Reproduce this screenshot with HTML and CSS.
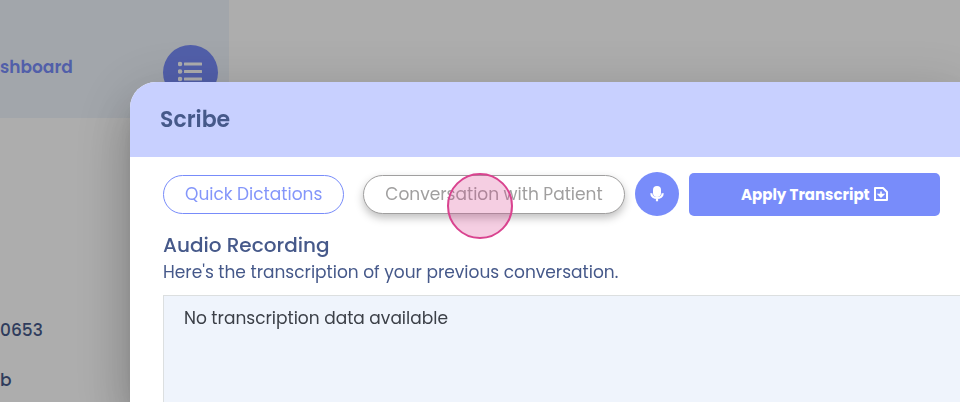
FILE: index.html
```html
<!DOCTYPE html>
<html lang="en">
<head>
    <meta charset="UTF-8">
    <meta name="viewport" content="width=device-width, initial-scale=1.0">
    <title>Scribe</title>
    <link rel="stylesheet" href="styles.css">
</head>
<body>
    <div class="page">
        <header class="topbar">
            <a class="topbar-link" href="#">shboard</a>
            <button class="menu-button" type="button" aria-label="Menu">
                <svg width="26" height="22" viewBox="1 1 26 22" fill="currentColor">
                    <circle cx="3" cy="4" r="2.3"/>
                    <circle cx="3" cy="11.5" r="2.3"/>
                    <circle cx="3" cy="19" r="2.3"/>
                    <rect x="7" y="2.5" width="18" height="3" rx="0.5"/>
                    <rect x="7" y="10" width="18" height="3" rx="0.5"/>
                    <rect x="7" y="17.5" width="18" height="3" rx="0.5"/>
                </svg>
            </button>
        </header>
        <div class="details">
            <div>0653</div>
            <div>b</div>
        </div>
    </div>

    <div class="overlay">
        <section class="modal" role="dialog" aria-labelledby="modal-title">
            <div class="modal-header">
                <h1 id="modal-title">Scribe</h1>
            </div>
            <div class="modal-body">
                <div class="toolbar">
                    <div class="tabs">
                        <button class="tab" type="button">Quick Dictations</button>
                        <button class="tab tab-hover" type="button">Conversation with Patient<span class="click-marker"></span></button>
                    </div>
                    <button class="mic-button" type="button" aria-label="Record">
                        <svg width="18" height="18" viewBox="0 0 18 18">
                            <rect x="5" y="1" width="8" height="11" rx="4" fill="currentColor"/>
                            <path d="M3.3 8.2c0 6.4 11.4 6.4 11.4 0M9 13v3.2" fill="none" stroke="currentColor" stroke-width="2.2"/>
                        </svg>
                    </button>
                    <button class="apply-button" type="button">
                        Apply Transcript
                        <svg width="14" height="16" viewBox="0 0 14 16" fill="none" stroke="currentColor" stroke-width="2">
                            <path d="M1 2h8l4 4v8H1z" stroke-linejoin="round"/>
                            <path d="M7 5.5v5M4.5 8.5L7 11l2.5-2.5z" stroke-width="1.5"/>
                        </svg>
                    </button>
                </div>
                <h2>Audio Recording</h2>
                <p class="subtitle">Here's the transcription of your previous conversation.</p>
                <div class="transcript">No transcription data available</div>
            </div>
        </section>
    </div>
</body>
</html>
```
FILE: styles.css
```css
* {
    box-sizing: border-box;
}

body {
    margin: 0;
    font-family: Poppins, Inter, "Open Sans", sans-serif;
    font-size: 17px;
    background: #fff;
    color: #46598a;
    overflow: hidden;
}

h1, h2, p {
    margin: 0;
}

button {
    font-family: inherit;
    border: none;
    padding: 0;
    cursor: pointer;
}

svg {
    display: block;
}

.topbar {
    display: flex;
    align-items: center;
    justify-content: space-between;
    width: 229px;
    height: 118px;
    padding: 26px 11px 0 0;
    background: #eff5fc;
}

.topbar-link {
    margin-bottom: 11px;
    color: #788cfa;
    font-weight: 600;
    text-decoration: none;
}

.menu-button {
    display: flex;
    align-items: center;
    justify-content: center;
    width: 55px;
    height: 55px;
    border-radius: 50%;
    background: #788cfa;
    color: #fff;
}

.details {
    display: grid;
    gap: 26px;
    padding-top: 200px;
    line-height: 24px;
    font-weight: 500;
}

.overlay {
    position: fixed;
    inset: 0;
    display: flex;
    padding: 82px 0 0 130px;
    background: rgba(0, 0, 0, 0.32);
}

.modal {
    flex: 1;
    min-width: 0;
    border-radius: 26px 0 0 0;
    background: #fff;
    box-shadow: 0 14px 20px -9px rgba(0, 0, 0, 0.2),
        0 30px 48px 4px rgba(0, 0, 0, 0.14),
        0 12px 58px 10px rgba(0, 0, 0, 0.12);
}

.modal-header {
    display: flex;
    align-items: center;
    height: 75px;
    padding: 0 30px;
    border-radius: 26px 0 0 0;
    background: #c8d0ff;
}

.modal-header h1 {
    font-size: 22px;
    font-weight: 600;
}

.modal-body {
    padding: 15px 0 0 33px;
}

.toolbar {
    display: flex;
    align-items: center;
    gap: 10px;
    padding-right: 20px;
}

.tabs {
    display: flex;
    gap: 19px;
}

.tab {
    height: 39px;
    padding: 0 21px;
    border: 1px solid #788cfa;
    border-radius: 20px;
    background: #fff;
    color: #8496fa;
    font-size: 17px;
    white-space: nowrap;
}

.tab-hover {
    position: relative;
    border-color: #a09f9f;
    color: #a09f9f;
    box-shadow: 0 4px 8px rgba(0, 0, 0, 0.25);
}

.click-marker {
    position: absolute;
    top: -3px;
    left: 83px;
    width: 66px;
    height: 66px;
    border: 2px solid #d9438f;
    border-radius: 50%;
    background: rgba(217, 67, 143, 0.26);
}

.mic-button {
    display: flex;
    align-items: center;
    justify-content: center;
    flex: none;
    width: 44px;
    height: 44px;
    border-radius: 50%;
    background: #788cfa;
    color: #fff;
}

.apply-button {
    display: flex;
    align-items: center;
    justify-content: center;
    gap: 4px;
    flex: 1;
    height: 43px;
    border-radius: 5px;
    background: #788cfa;
    color: #fff;
    font-size: 15px;
    font-weight: 700;
}

h2 {
    margin-top: 15px;
    font-size: 20px;
    font-weight: 500;
    line-height: 28px;
}

.subtitle {
    line-height: 26px;
}

.transcript {
    height: 300px;
    margin-top: 10px;
    padding: 9px 20px;
    border: 1px solid #dcdfe0;
    border-right: none;
    background: #eff4fc;
    color: #3c4048;
    line-height: 26px;
}
```
